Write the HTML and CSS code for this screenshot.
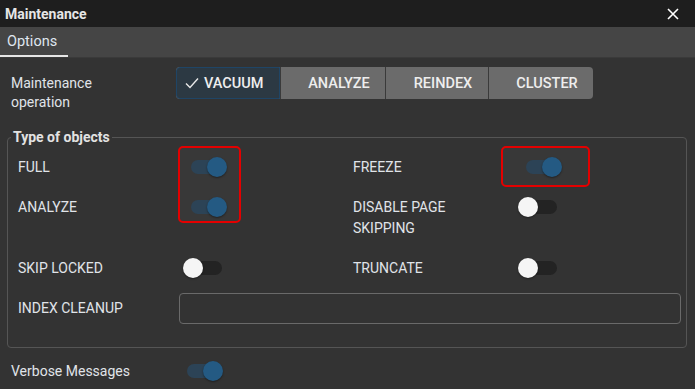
FILE: index.html
```html
<!DOCTYPE html>
<html lang="en">
<head>
  <meta charset="UTF-8">
  <title>Maintenance</title>
  <link rel="stylesheet" href="styles.css">
</head>
<body>
  <div class="dialog">
    <div class="titlebar">
      <span class="title">Maintenance</span>
      <svg class="close" width="12" height="12" viewBox="0 0 12 12"><path d="M1 1L11 11M11 1L1 11" stroke="#fff" stroke-width="1.6"/></svg>
    </div>

    <div class="tabs">
      <div class="tab active">Options</div>
    </div>

    <div class="content">
      <div class="op-row">
        <div class="op-label">Maintenance<br>operation</div>
        <div class="btn-group">
          <button class="seg selected"><svg width="14" height="12" viewBox="0 0 14 12"><path d="M1 6.5L5 10.5L13 1.5" fill="none" stroke="#e8e8e8" stroke-width="1.4"/></svg>VACUUM</button>
          <button class="seg">ANALYZE</button>
          <button class="seg">REINDEX</button>
          <button class="seg">CLUSTER</button>
        </div>
      </div>

      <fieldset class="objects">
        <legend>Type of objects</legend>
        <div class="grid">
          <div class="lbl r1">FULL</div>
          <div class="ctl r1 c2"><div class="mark mark-left"></div><span class="switch on"></span></div>
          <div class="lbl r1 c3">FREEZE</div>
          <div class="ctl r1 c4"><div class="mark mark-right"></div><span class="switch on"></span></div>

          <div class="lbl r2 top">ANALYZE</div>
          <div class="ctl r2 c2 top"><span class="switch on"></span></div>
          <div class="lbl r2 c3 top">DISABLE PAGE<br>SKIPPING</div>
          <div class="ctl r2 c4 top"><span class="switch"></span></div>

          <div class="lbl r3">SKIP LOCKED</div>
          <div class="ctl r3 c2"><span class="switch"></span></div>
          <div class="lbl r3 c3">TRUNCATE</div>
          <div class="ctl r3 c4"><span class="switch"></span></div>

          <div class="lbl r4">INDEX CLEANUP</div>
          <div class="ctl r4 wide"><input class="text-input" type="text"></div>
        </div>
      </fieldset>

      <div class="verbose-row">
        <div class="verbose-label">Verbose Messages</div>
        <span class="switch on"></span>
      </div>
    </div>
  </div>
</body>
</html>
```

FILE: styles.css
```css
* {
  box-sizing: border-box;
  margin: 0;
  padding: 0;
}

body {
  font-family: Roboto, "Liberation Sans", sans-serif;
  background: #333333;
  color: #e0e4e9;
  width: 695px;
  height: 389px;
  overflow: hidden;
}

.titlebar {
  height: 27px;
  background: #1e1e1e;
  display: flex;
  align-items: center;
  justify-content: space-between;
  padding: 0 16px 0 5px;
}

.title {
  font-size: 14px;
  font-weight: 700;
  color: #e6e6e6;
}

.tabs {
  height: 31px;
  background: #454545;
  border-bottom: 1px solid #3a3a3a;
  display: flex;
}

.tab {
  width: 68px;
  padding-left: 7px;
  font-size: 14.5px;
  line-height: 30px;
  color: #dfe6ee;
}

.tab.active {
  border-bottom: 2px solid #e6e6e6;
}

.content {
  padding: 9px 8px 0 7px;
}

.op-row {
  display: flex;
  align-items: flex-start;
}

.op-label {
  width: 169px;
  padding: 7px 0 0 4px;
  font-size: 14px;
  line-height: 19px;
}

.btn-group {
  display: flex;
  height: 32px;
  background: #6b6b6b;
  border-radius: 4px;
}

.seg {
  height: 32px;
  border: none;
  border-left: 1px solid #3a3a3a;
  background: transparent;
  color: #eeeeee;
  font-family: Roboto, "Liberation Sans", sans-serif;
  font-size: 14.5px;
  font-weight: 500;
  display: flex;
  align-items: center;
  justify-content: center;
  padding-left: 12px;
}

.seg:nth-child(2) { width: 105px; }
.seg:nth-child(3) { width: 103px; }
.seg:nth-child(4) { width: 105px; border-radius: 0 4px 4px 0; }

.seg.selected {
  width: 104px;
  justify-content: flex-start;
  gap: 5px;
  padding-left: 8px;
  background: #2c3943;
  border: 1px solid #1f4566;
  border-radius: 4px 0 0 4px;
}

.objects {
  margin-top: 15px;
  border: 1px solid #555555;
  border-radius: 4px;
  padding: 4px 5px 23px 10px;
  width: 680px;
}

.objects legend {
  margin-left: -7px;
  padding: 0 2px;
  font-size: 14px;
  font-weight: 700;
  line-height: 20px;
  color: #e2e2e2;
}

.grid {
  display: grid;
  grid-template-columns: 161px 174px 161px 167px;
  grid-template-rows: 32px 50px 30px 31px;
  row-gap: 10px;
}

.lbl {
  font-size: 14px;
  line-height: 21px;
  display: flex;
  align-items: center;
}

.ctl {
  position: relative;
  display: flex;
  align-items: center;
}

.r1 { grid-row: 1; }
.r2 { grid-row: 2; }
.r3 { grid-row: 3; }
.r4 { grid-row: 4; }
.c2 { grid-column: 2; }
.c3 { grid-column: 3; }
.c4 { grid-column: 4; }
.wide { grid-column: 2 / 5; }

.lbl.top {
  align-items: flex-start;
  padding-top: 4px;
}

.ctl.top {
  align-items: flex-start;
  padding-top: 4px;
}

.switch {
  position: relative;
  display: block;
  width: 44px;
  height: 20px;
  margin-left: 4px;
}

.switch::before {
  content: '';
  position: absolute;
  left: 5px;
  top: 3px;
  width: 34px;
  height: 14px;
  border-radius: 7px;
  background: #232323;
}

.switch::after {
  content: '';
  position: absolute;
  left: 0;
  top: 0;
  width: 20px;
  height: 20px;
  border-radius: 50%;
  background: #f5f5f5;
  box-shadow: 0 1px 2px rgba(0, 0, 0, 0.4);
}

.switch.on::before {
  left: 8px;
  width: 34px;
  background: #2c4356;
}

.switch.on::after {
  left: 24px;
  background: #245a83;
}

.mark {
  position: absolute;
  border: 2px solid #e40000;
  border-radius: 5px;
  background: #383838;
  z-index: -1;
}

.mark-left {
  left: -1px;
  top: -5px;
  width: 63px;
  height: 77px;
}

.mark-right {
  left: -13px;
  top: -5px;
  width: 89px;
  height: 41px;
}

.text-input {
  width: 100%;
  height: 31px;
  background: transparent;
  border: 1px solid #6a6a6a;
  border-radius: 4px;
}

.verbose-row {
  display: flex;
  align-items: center;
  margin-top: 13px;
}

.verbose-label {
  width: 172px;
  padding-left: 4px;
  font-size: 14px;
}

.verbose-row .switch {
  margin-left: 0;
}
```
